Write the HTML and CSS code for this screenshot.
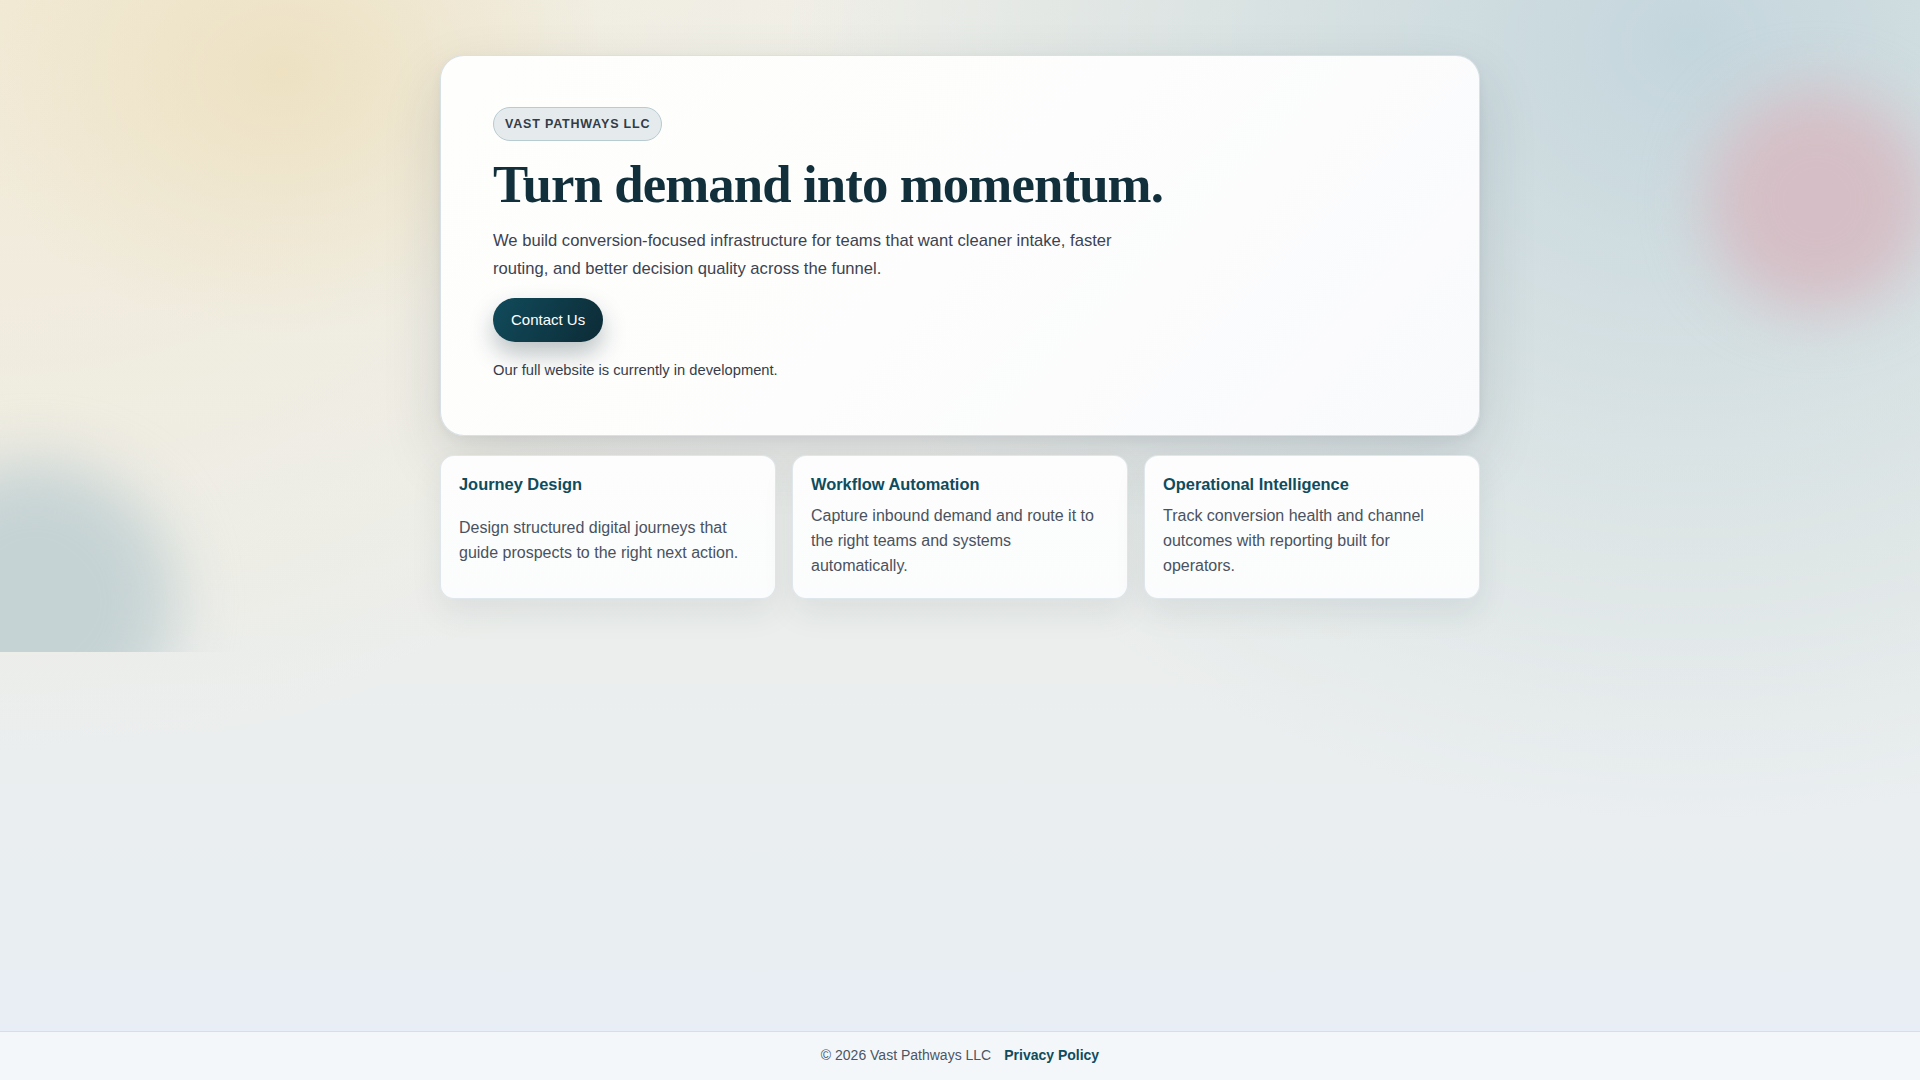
FILE: index.html
```html
<!DOCTYPE html>
<html lang="en">
<head>
<meta charset="utf-8">
<title>Vast Pathways LLC</title>
<link rel="stylesheet" href="styles.css">
</head>
<body>
  <div class="page">
    <div class="blob blob-pink"></div>
    <div class="blob blob-sage"></div>
    <main class="main">
      <section class="hero">
        <span class="badge">Vast Pathways LLC</span>
        <h1 class="hero-title">Turn demand into momentum.</h1>
        <p class="lead">We build conversion-focused infrastructure for teams that want cleaner intake, faster routing, and better decision quality across the funnel.</p>
        <a class="cta" href="#">Contact Us</a>
        <p class="note">Our full website is currently in development.</p>
      </section>
      <section class="features">
        <article class="feature">
          <h3 class="feature-title">Journey Design</h3>
          <p class="feature-text">Design structured digital journeys that guide prospects to the right next action.</p>
        </article>
        <article class="feature">
          <h3 class="feature-title">Workflow Automation</h3>
          <p class="feature-text">Capture inbound demand and route it to the right teams and systems automatically.</p>
        </article>
        <article class="feature">
          <h3 class="feature-title">Operational Intelligence</h3>
          <p class="feature-text">Track conversion health and channel outcomes with reporting built for operators.</p>
        </article>
      </section>
    </main>
  </div>
  <footer class="footer">
    <span class="copy">© 2026 Vast Pathways LLC</span>
    <a class="footer-link" href="#">Privacy Policy</a>
  </footer>
</body>
</html>
```

FILE: styles.css
```css
* {
  box-sizing: border-box;
}

html {
  height: 100%;
}

body {
  margin: 0;
  min-height: 100vh;
  display: flex;
  flex-direction: column;
  font-family: "Liberation Sans", Arial, sans-serif;
  color: #374151;
  background:
    radial-gradient(ellipse 320px 260px at 282px 73px, rgba(236, 222, 186, 0.75), rgba(236, 222, 186, 0) 100%),
    radial-gradient(ellipse 900px 760px at 0% 0%, rgba(242, 234, 214, 1), rgba(242, 234, 214, 0) 100%),
    radial-gradient(ellipse 900px 780px at 88% 4%, rgba(196, 214, 221, 1), rgba(196, 214, 221, 0) 100%),
    linear-gradient(180deg, #f0efe8 0%, #eceeec 55%, #e8eef6 100%);
}

.page {
  position: relative;
  overflow: hidden;
}

.blob {
  position: absolute;
  border-radius: 50%;
  pointer-events: none;
}

.blob-pink {
  left: 1707px;
  top: 90px;
  width: 220px;
  height: 220px;
  background: #d5bec5;
  filter: blur(30px);
}

.blob-sage {
  left: -105px;
  top: 462px;
  width: 280px;
  height: 280px;
  background: #c6d3d4;
  filter: blur(30px);
}

.main {
  position: relative;
  width: 1040px;
  margin: 0 auto;
  padding: 55px 0 53px;
  display: flex;
  flex-direction: column;
  gap: 19px;
}

.hero {
  display: flex;
  flex-direction: column;
  align-items: flex-start;
  padding: 51px 51px 54px 52px;
  border: 1px solid rgba(205, 218, 224, 0.8);
  border-radius: 24px;
  background: linear-gradient(135deg, #fefefd 0%, #fdfdfd 50%, #f9fafc 100%);
  box-shadow: 0 24px 60px rgba(25, 45, 60, 0.14), 0 4px 12px rgba(25, 45, 60, 0.05);
}

.badge {
  display: inline-block;
  padding: 8px 11px;
  line-height: 16px;
  font-size: 12.5px;
  font-weight: 700;
  letter-spacing: 0.065em;
  text-transform: uppercase;
  color: #323c47;
  background: #e5ebed;
  border: 1px solid #b7cbd1;
  border-radius: 999px;
}

.hero-title {
  margin: 14px 0 0;
  font-family: "Liberation Serif", "Times New Roman", serif;
  font-size: 52.8px;
  line-height: 1.1;
  font-weight: 700;
  letter-spacing: -0.017em;
  color: #11303b;
}

.lead {
  margin: 14px 0 0;
  max-width: 650px;
  font-size: 16.6px;
  line-height: 27.5px;
  color: #3c4350;
}

.cta {
  margin-top: 16px;
  display: inline-block;
  padding: 12px 18px;
  font-size: 15px;
  line-height: 19.5px;
  color: #ffffff;
  text-decoration: none;
  border-radius: 999px;
  background: linear-gradient(120deg, #114b5b 0%, #0c2b36 100%);
  box-shadow: 0 12px 24px rgba(15, 40, 52, 0.28);
}

.note {
  margin: 17px 0 0;
  font-size: 14.72px;
  line-height: 22px;
  color: #363d4a;
}

.features {
  display: grid;
  grid-template-columns: repeat(3, 1fr);
  gap: 16px;
}

.feature {
  display: flex;
  flex-direction: column;
  padding: 18px 18px 20px;
  border: 1px solid rgba(220, 228, 234, 0.9);
  border-radius: 14px;
  background: linear-gradient(180deg, #fdfdfd 0%, #fbfcfd 100%);
  box-shadow: 0 14px 32px rgba(25, 45, 60, 0.08);
}

.feature-title {
  margin: 0 0 8px;
  font-size: 16.4px;
  line-height: 21.3px;
  font-weight: 700;
  color: #0f4c5c;
}

.feature-text {
  margin: auto 0;
  font-size: 16px;
  line-height: 25px;
  color: #4a5260;
}

.footer {
  margin-top: auto;
  display: flex;
  justify-content: center;
  align-items: center;
  gap: 13px;
  padding: 15px 0 16px;
  line-height: 17px;
  font-size: 14px;
  background: #f4f7fa;
  border-top: 1px solid #d6dee6;
}

.copy {
  color: #4b5563;
}

.footer-link {
  color: #0f4c5c;
  font-weight: 700;
  text-decoration: none;
}
```
